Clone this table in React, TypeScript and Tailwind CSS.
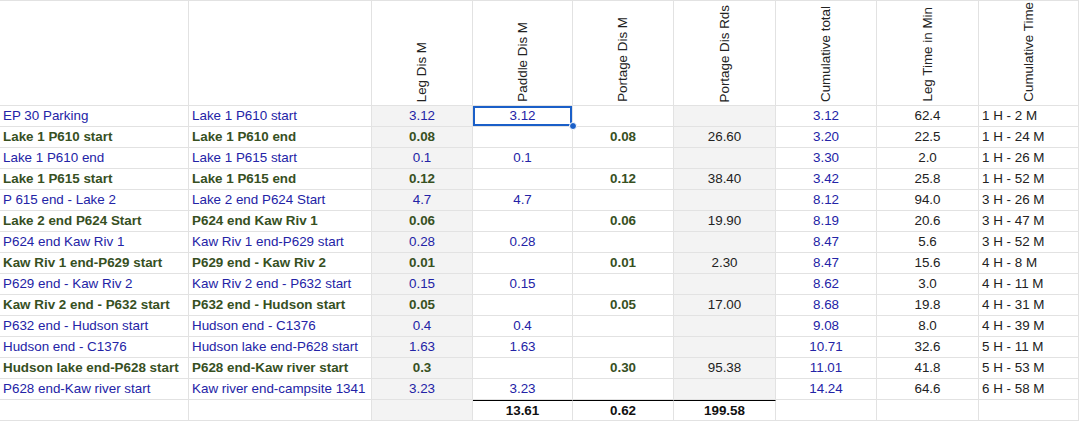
import React from "react";

type Tone = "blue" | "green" | "black" | "total";

interface Leg {
  from: string;
  to: string;
  leg: string;
  paddle?: string;
  portage?: string;
  rods?: string;
  cumulative: string;
  minutes: string;
  time: string;
}

const COLS = [189, 183, 101, 100, 101, 102, 101, 102, 100];

const HEADERS = [
  "",
  "",
  "Leg Dis M",
  "Paddle Dis M",
  "Portage Dis M",
  "Portage Dis Rds",
  "Cumulative total",
  "Leg Time in Min",
  "Cumulative Time",
];

const LEGS: Leg[] = [
  { from: "EP 30 Parking", to: "Lake 1 P610 start", leg: "3.12", paddle: "3.12", cumulative: "3.12", minutes: "62.4", time: "1 H - 2 M" },
  { from: "Lake 1 P610 start", to: "Lake 1 P610 end", leg: "0.08", portage: "0.08", rods: "26.60", cumulative: "3.20", minutes: "22.5", time: "1 H - 24 M" },
  { from: "Lake 1 P610 end", to: "Lake 1 P615 start", leg: "0.1", paddle: "0.1", cumulative: "3.30", minutes: "2.0", time: "1 H - 26 M" },
  { from: "Lake 1 P615 start", to: "Lake 1 P615 end", leg: "0.12", portage: "0.12", rods: "38.40", cumulative: "3.42", minutes: "25.8", time: "1 H - 52 M" },
  { from: "P 615 end - Lake 2", to: "Lake 2 end P624 Start", leg: "4.7", paddle: "4.7", cumulative: "8.12", minutes: "94.0", time: "3 H - 26 M" },
  { from: "Lake 2 end P624 Start", to: "P624 end Kaw Riv 1", leg: "0.06", portage: "0.06", rods: "19.90", cumulative: "8.19", minutes: "20.6", time: "3 H - 47 M" },
  { from: "P624 end Kaw Riv 1", to: "Kaw Riv 1 end-P629 start", leg: "0.28", paddle: "0.28", cumulative: "8.47", minutes: "5.6", time: "3 H - 52 M" },
  { from: "Kaw Riv 1 end-P629 start", to: "P629 end - Kaw Riv 2", leg: "0.01", portage: "0.01", rods: "2.30", cumulative: "8.47", minutes: "15.6", time: "4 H - 8 M" },
  { from: "P629 end - Kaw Riv 2", to: "Kaw Riv 2 end - P632 start", leg: "0.15", paddle: "0.15", cumulative: "8.62", minutes: "3.0", time: "4 H - 11 M" },
  { from: "Kaw Riv 2 end - P632 start", to: "P632 end - Hudson start", leg: "0.05", portage: "0.05", rods: "17.00", cumulative: "8.68", minutes: "19.8", time: "4 H - 31 M" },
  { from: "P632 end - Hudson start", to: "Hudson end - C1376", leg: "0.4", paddle: "0.4", cumulative: "9.08", minutes: "8.0", time: "4 H - 39 M" },
  { from: "Hudson end - C1376", to: "Hudson lake end-P628 start", leg: "1.63", paddle: "1.63", cumulative: "10.71", minutes: "32.6", time: "5 H - 11 M" },
  { from: "Hudson lake end-P628 start", to: "P628 end-Kaw river start", leg: "0.3", portage: "0.30", rods: "95.38", cumulative: "11.01", minutes: "41.8", time: "5 H - 53 M" },
  { from: "P628 end-Kaw river start", to: "Kaw river end-campsite 1341", leg: "3.23", paddle: "3.23", cumulative: "14.24", minutes: "64.6", time: "6 H - 58 M" },
];

const toneClass: Record<Tone, string> = {
  blue: "text-[#2323a6]",
  green: "text-[#37501f] font-bold",
  black: "text-[#222222]",
  total: "text-[#111111] font-bold",
};

function Cell({
  children,
  tone = "black",
  align = "center",
  shaded = false,
  rule = false,
  selected = false,
}: {
  children?: React.ReactNode;
  tone?: Tone;
  align?: "left" | "center";
  shaded?: boolean;
  rule?: boolean;
  selected?: boolean;
}) {
  return (
    <div
      className={[
        "relative flex h-[21px] items-center overflow-hidden whitespace-nowrap border-r border-b border-[#e2e2e2] leading-none",
        align === "left" ? "justify-start pl-[3px]" : "justify-center",
        shaded ? "bg-[#f3f3f3]" : "bg-white",
        rule ? "border-t border-t-black" : "",
        toneClass[tone],
      ].join(" ")}
    >
      {children}
      {selected && (
        <div className="pointer-events-none absolute inset-0 border-2 border-[#1a5fc8]" />
      )}
    </div>
  );
}

export default function App() {
  return (
    <div
      className="relative w-[1079px] bg-white text-[13.4px]"
      style={{ fontFamily: '"Liberation Sans", Arial, sans-serif' }}
    >
      <div
        className="grid border-t border-[#e2e2e2]"
        style={{ gridTemplateColumns: COLS.map((w) => `${w}px`).join(" ") }}
      >
        {HEADERS.map((h, i) => (
          <div
            key={i}
            className="flex h-[105px] items-end justify-center border-r border-b border-[#e2e2e2] pb-[3px] text-[#222222]"
          >
            {h && (
              <span className="rotate-180 whitespace-nowrap leading-none [writing-mode:vertical-rl]">
                {h}
              </span>
            )}
          </div>
        ))}

        {LEGS.map((leg, r) => {
          // portage legs are written in bold green, paddle legs in blue
          const tone: Tone = leg.portage ? "green" : "blue";
          return (
            <React.Fragment key={r}>
              <Cell tone={tone} align="left">{leg.from}</Cell>
              <Cell tone={tone} align="left">{leg.to}</Cell>
              <Cell tone={tone} shaded>{leg.leg}</Cell>
              <Cell tone="blue" selected={r === 0}>{leg.paddle}</Cell>
              <Cell tone="green">{leg.portage}</Cell>
              <Cell tone="black" shaded>{leg.rods}</Cell>
              <Cell tone="blue">{leg.cumulative}</Cell>
              <Cell tone="black">{leg.minutes}</Cell>
              <Cell tone="black" align="left">{leg.time}</Cell>
            </React.Fragment>
          );
        })}

        {/* totals */}
        <Cell />
        <Cell />
        <Cell shaded />
        <Cell tone="total" rule>13.61</Cell>
        <Cell tone="total" rule>0.62</Cell>
        <Cell tone="total" rule>199.58</Cell>
        <Cell />
        <Cell />
        <Cell />
      </div>

      {/* fill handle of the selected cell */}
      <div className="absolute left-[569px] top-[122px] h-[8px] w-[8px] rounded-full border border-white bg-[#1a5fc8]" />
    </div>
  );
}
